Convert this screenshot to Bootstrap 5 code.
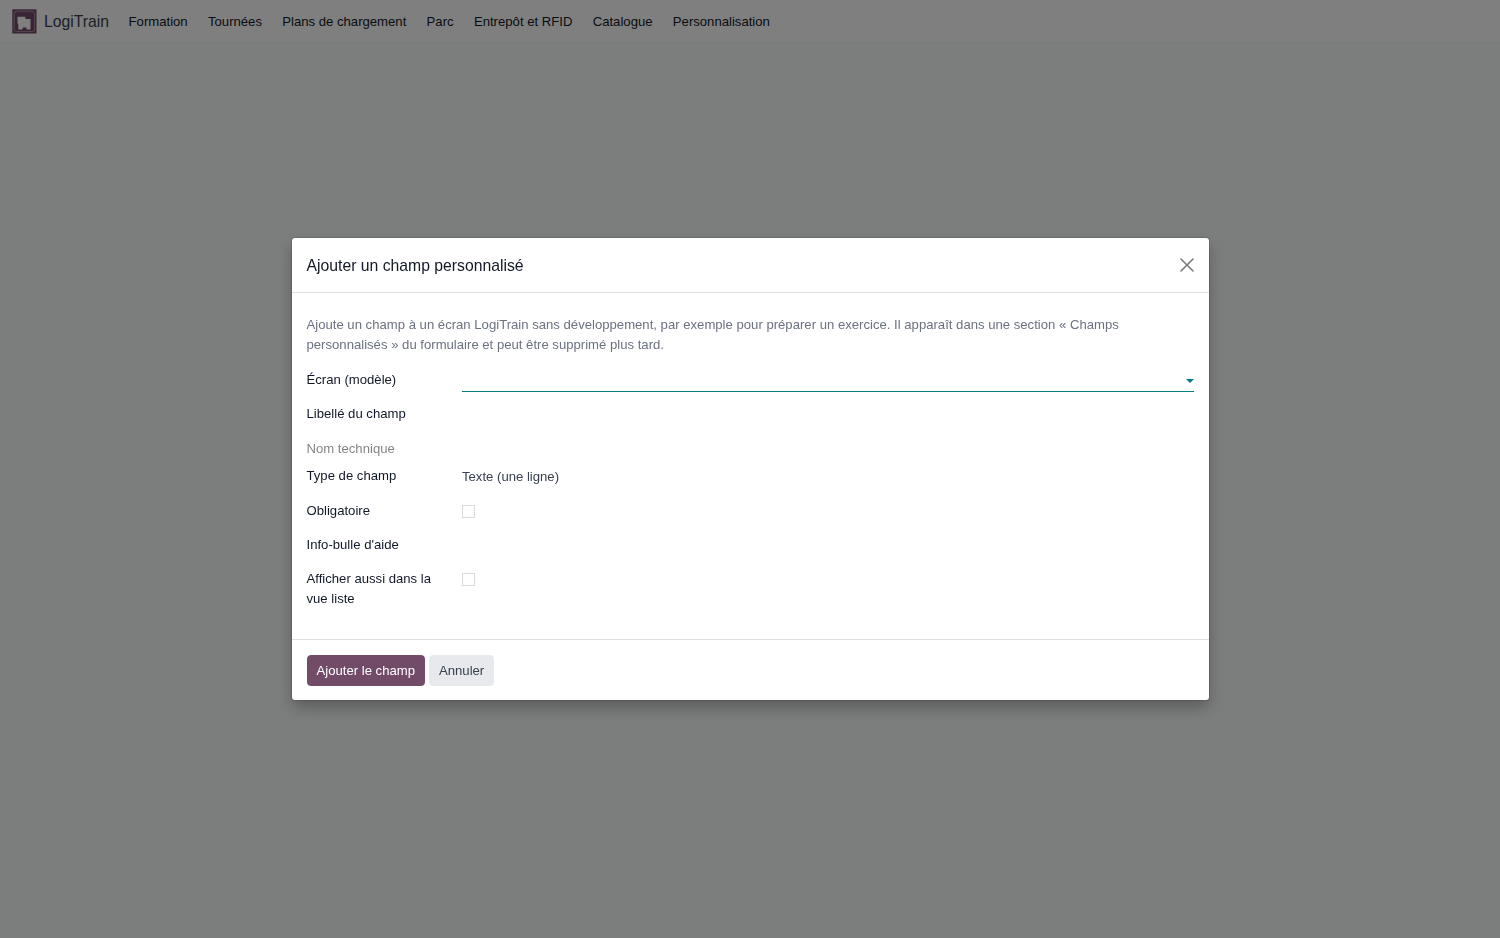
<!DOCTYPE html>
<html lang="fr">
<head>
<meta charset="utf-8">
<meta name="viewport" content="width=device-width, initial-scale=1">
<title>LogiTrain</title>
<link href="https://cdn.jsdelivr.net/npm/bootstrap@5.3.0/dist/css/bootstrap.min.css" rel="stylesheet">
<style>
  html, body { height: 100%; }
  body { font-family: "Liberation Sans", Arial, sans-serif; font-size: 13.14px; line-height: 19.7px; background: #f9fafb; color: #374151; overflow: hidden; }
  .topbar { height: 43px; background: #fff; border-bottom: 1px solid #f3f4f6; padding: 0 12px; }
  .topbar .navbar-brand { font-size: 15.75px; line-height: 20px; color: #374151; gap: 7px; margin-right: 19.5px; padding: 1px 0 0; }
  .topbar .navbar-nav { gap: 20.3px; padding-top: 2px; }
  .topbar .navbar-nav .nav-link { padding: 0; color: #111827; }
  .modal-backdrop { --bs-backdrop-opacity: .5; }
  .modal-dialog { max-width: 917px; margin: 0 auto; padding-top: 238px; }
  .modal-content { border: 0; border-radius: 3px; box-shadow: 0 7.5px 15px rgba(0,0,0,.25), 0 0 0 1px rgba(0,0,0,.12); color: #111827; }
  .modal-header { height: 55px; padding: 0 15px; border-bottom: 1px solid #dee2e6; }
  .modal-title { font-size: 15.75px; line-height: 24px; font-weight: 400; padding-top: 1px; }
  .close-x { width: 14px; height: 14px; color: #7a7a7a; }
  .modal-body { height: 346px; padding: 22px 15px 0; }
  .intro { color: #6b7280; margin-bottom: 15.3px; width: 850px; }
  .field { display: grid; grid-template-columns: 140.5px 1fr; column-gap: 15px; }
  .picker { height: 21.8px; position: relative; border-bottom: 1px solid #017e84; }
  .caret { width: 0; height: 0; margin-top: 1px; border: 4px solid transparent; border-top-color: #017e84; border-bottom: 0; }
  .type-value { color: #374151; padding-top: 1px; }
  .field .form-check-input { width: 13px; height: 13px; margin: 4px 0 0; border: 1px solid #d8dadd; border-radius: 0; }
  .modal-footer { height: 61px; padding: 1px 15px 0; gap: 4px; border-top: 1px solid #dee2e6; }
  .modal-footer > * { margin: 0; }
  .act { height: 31px; padding: 0 9px; font-size: 13.14px; line-height: 29px; border-radius: 3.75px; }
  .act-main { background: #714b67; border-color: #714b67; color: #fff; }
  .act-alt { background: #e7e9ed; border-color: #e7e9ed; color: #374151; }
</style>
</head>
<body>
<nav class="navbar navbar-expand topbar">
  <a class="navbar-brand d-flex align-items-center" href="#">
    <svg width="25" height="25" viewBox="0 0 25 25">
      <rect x=".3" y=".3" width="24.2" height="24.2" fill="#714b67"/>
      <rect x="2.2" y="2.2" width="20.4" height="20.4" rx="2.5" fill="none" stroke="#b9a5b3" stroke-width=".8"/>
      <path d="M5.5 7.8H13.4V10H18.5V20.5H14.5V18.5H10.6V20.5H6.3V15.5L5.5 14.5z" fill="#fff"/>
    </svg>
    LogiTrain
  </a>
  <div class="navbar-nav">
    <a class="nav-link" href="#">Formation</a>
    <a class="nav-link" href="#">Tournées</a>
    <a class="nav-link" href="#">Plans de chargement</a>
    <a class="nav-link" href="#">Parc</a>
    <a class="nav-link" href="#">Entrepôt et RFID</a>
    <a class="nav-link" href="#">Catalogue</a>
    <a class="nav-link" href="#">Personnalisation</a>
  </div>
</nav>

<div class="modal-backdrop show"></div>
<div class="modal d-block" tabindex="-1" role="dialog">
  <div class="modal-dialog">
    <div class="modal-content">
      <div class="modal-header">
        <h4 class="modal-title">Ajouter un champ personnalisé</h4>
        <button type="button" class="btn p-0 border-0 d-flex" aria-label="Fermer">
          <svg class="close-x" viewBox="0 0 14 14" fill="none" stroke="currentColor" stroke-width="1.6" stroke-linecap="round"><path d="M1 1l12 12M13 1L1 13"/></svg>
        </button>
      </div>
      <div class="modal-body">
        <p class="intro">Ajoute un champ à un écran LogiTrain sans développement, par exemple pour préparer un exercice. Il apparaît dans une section «&nbsp;Champs personnalisés&nbsp;» du formulaire et peut être supprimé plus tard.</p>
        <div class="field" style="height:34.5px"><label>Écran (modèle)</label><div class="picker d-flex align-items-center justify-content-end"><span class="caret"></span></div></div>
        <div class="field" style="height:35px"><label>Libellé du champ</label></div>
        <div class="field" style="height:27px"><label class="text-black-50">Nom technique</label></div>
        <div class="field" style="height:35px"><label>Type de champ</label><span class="type-value">Texte (une ligne)</span></div>
        <div class="field" style="height:34px"><label>Obligatoire</label><input class="form-check-input" type="checkbox"></div>
        <div class="field" style="height:34px"><label>Info-bulle d'aide</label></div>
        <div class="field"><label>Afficher aussi dans la vue liste</label><input class="form-check-input" type="checkbox"></div>
      </div>
      <div class="modal-footer justify-content-start">
        <button type="button" class="btn act act-main">Ajouter le champ</button>
        <button type="button" class="btn act act-alt">Annuler</button>
      </div>
    </div>
  </div>
</div>
<script src="https://cdn.jsdelivr.net/npm/bootstrap@5.3.0/dist/js/bootstrap.bundle.min.js"></script>
</body>
</html>
